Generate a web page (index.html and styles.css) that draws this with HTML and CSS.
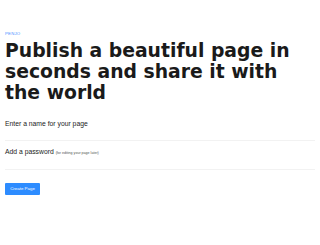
FILE: index.html
```html
<!DOCTYPE html>
<html lang="en">
<head>
  <meta charset="UTF-8">
  <title>Penjo</title>
  <meta name="viewport" content="width=device-width, initial-scale=1.0">
  <link rel="stylesheet" href="styles.css">
</head>
<body>

  <div class="page">
    <div class="brand">PENJO</div>
    <h1 class="title">Publish a beautiful page in seconds and share it with the world</h1>

    <form class="create-form">
      <div class="field">
        <label for="page-name">Enter a name for your page</label>
        <input id="page-name" type="text">
      </div>
      <div class="field">
        <label for="page-pass">Add a password <small>(for editing your page later)</small></label>
        <input id="page-pass" type="password">
      </div>
      <button type="button" class="create-button">Create Page</button>
    </form>
  </div>

</body>
</html>
```

FILE: styles.css
```css
* { box-sizing: border-box; margin: 0; padding: 0; }
body {
  background: #fff;
  color: #222;
  font-family: "Liberation Sans", Arial, sans-serif;
}
.page { padding: 31px 5px 0 5px; }
.brand {
  font-size: 4.3px;
  color: #4a90ff;
  line-height: 6px;
  letter-spacing: 0.2px;
}
.title {
  font-family: "DejaVu Sans", sans-serif;
  font-weight: bold;
  font-size: 18.8px;
  line-height: 21px;
  color: #1a1a1a;
  margin-top: 3px;
  max-width: 300px;
}
.create-form { margin-top: 16px; }
.field {
  display: flex;
  flex-direction: column;
}
.field label {
  font-size: 6.8px;
  line-height: 10px;
  color: #1c1c1c;
}
.field small { font-size: 3.6px; color: #555; }
.field input {
  border: none;
  border-bottom: 1px solid #f2f2f2;
  height: 12px;
  margin-bottom: 6px;
  outline: none;
  background: transparent;
}
.create-button {
  margin-top: 6px;
  width: 35px;
  height: 12px;
  border: none;
  border-radius: 1px;
  background: #2d8cff;
  color: #fff;
  font-family: "Liberation Sans", Arial, sans-serif;
  font-size: 4.4px;
}
```
